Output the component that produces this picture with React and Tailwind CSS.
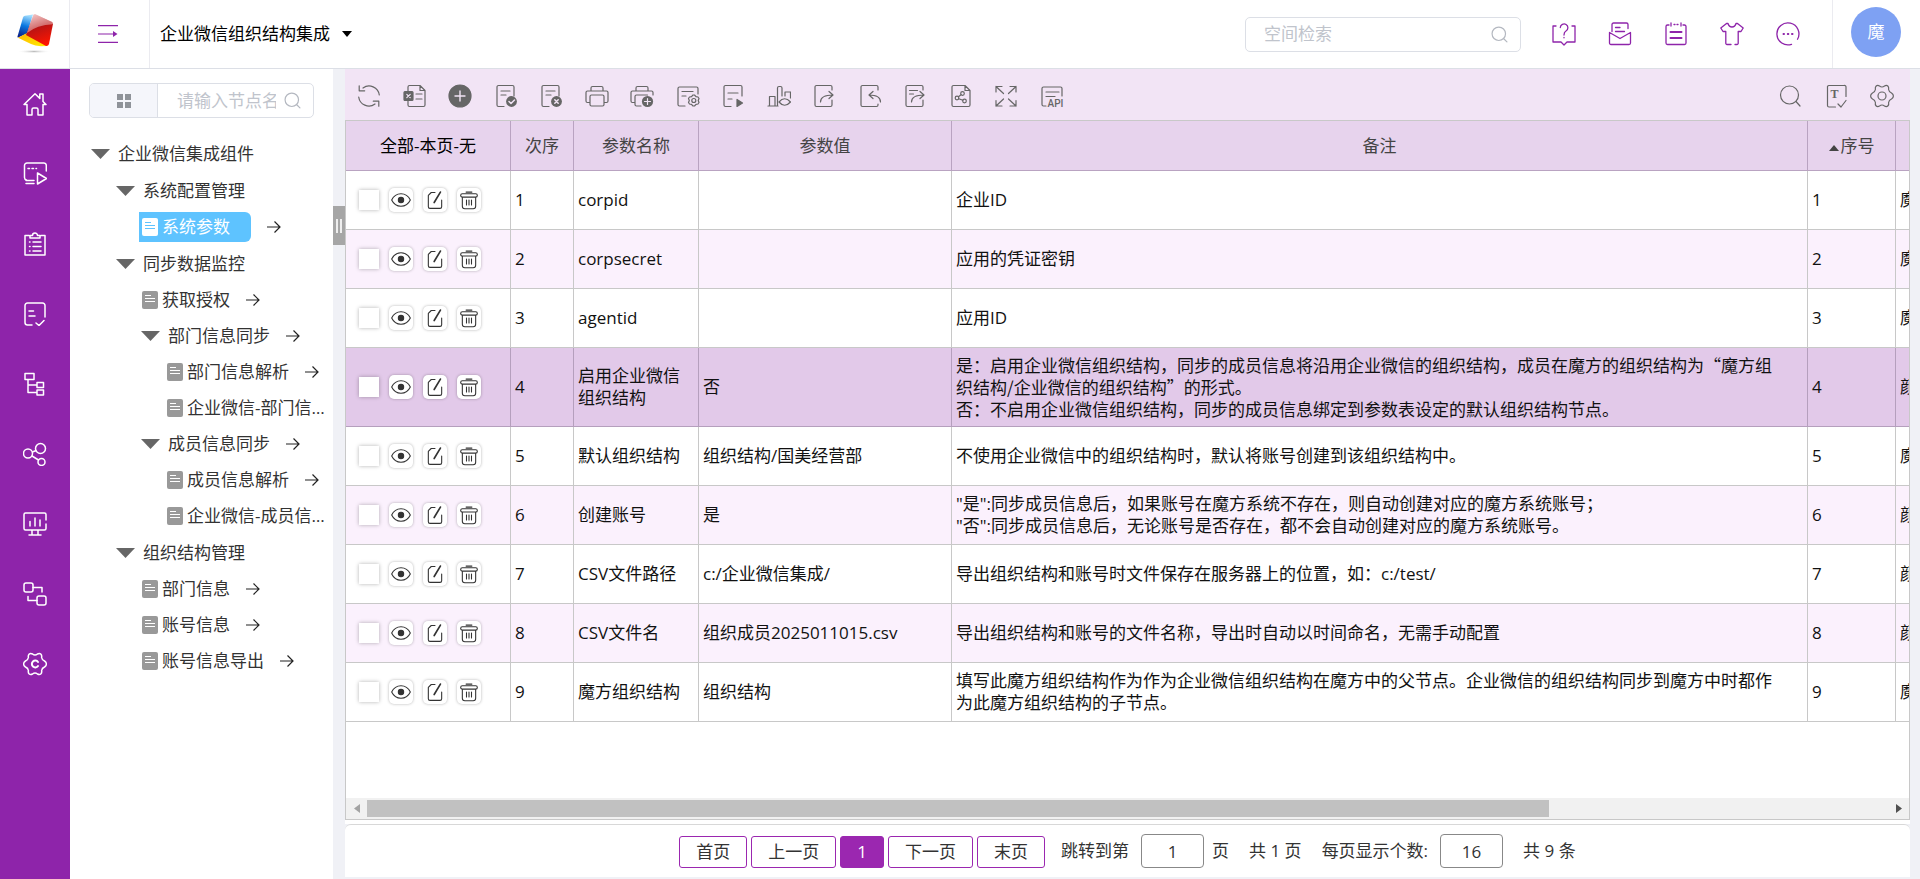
import React from "react";

function Svg({ children, className = "size-6", sw = 1.2 }) {
  return (
    <svg
      viewBox="0 0 24 24"
      className={"shrink-0 " + className}
      fill="none"
      stroke="currentColor"
      strokeWidth={sw}
      strokeLinecap="round"
      strokeLinejoin="round"
      aria-hidden="true"
    >
      {children}
    </svg>
  );
}

const GEAR =
  "M9.5 2Q12 4 14.5 2 16.5.8 18 2.200 19 3.400 18.600 5.500 19 8 21.500 9 23.400 10.200 23.400 12 23.400 13.800 21.500 15 19 16 18.600 18.500 19 20.600 18 21.800 16.500 23.200 14.500 22 12 20 9.500 22 7.500 23.200 6 21.800 5 20.600 5.400 18.500 5 16 2.500 15 .6 13.800 .6 12 .6 10.200 2.500 9 5 8 5.400 5.500 5 3.400 6 2.200 7.500 .8 9.500 2Z";

const navItems = [
  ["首页", <>
    <path d="M1 12.5 12 1.8l4.8 4.6V2h3.2v7.5l3 3h-3V23h-5v-5.5a1.5 1.5 0 0 0-1.5-1.5h-3A1.5 1.5 0 0 0 9 17.500V23H4V12.500Z" />
  </>],
  ["应用运行", <>
    <path d="M3.500 18a2.500 2.500 0 0 1-2-2.500v-12A2.500 2.500 0 0 1 4 1h17a2.500 2.500 0 0 1 2.300 2.500V9M3 18.500h8M3 21.500h8" />
    <path d="M5 6.500h1.500M9 6.500h1.500M13 6.500h.5M14.500 11v11l9-5.500Z" />
  </>],
  ["任务清单", <>
    <path d="M6 3.500H2V23h20V3.500h-4M7 6h10V3.500h-2.500a2.500 2.500 0 0 0-5 0H7Z" />
    <path d="M6.500 10h.5M6.500 14.500h.5M6.500 19h.5M10 10h8M10 14.500h8M10 19h8" />
  </>],
  ["审批", <>
    <path d="M9 23H4.500A2.500 2.500 0 0 1 2 20.500v-17A2.500 2.500 0 0 1 4.500 1h15A2.500 2.500 0 0 1 22 3.500V15M6 9h4.500M6 14h6M13 21l3 2.500 5-5" />
  </>],
  ["流程树", <>
    <path d="M2 1.500h9v6H2ZM5 7.500v13h9M5 13h9M14 10.500h6.500v5H14ZM14 18h6.500v5H14Z" />
  </>],
  ["共享", <>
    <circle cx="17.500" cy="6.500" r="5" />
    <circle cx="5" cy="11.500" r="4.500" />
    <circle cx="18.500" cy="20" r="3.500" />
    <path d="M9.500 10l3.500-1.500M9 14l6.500 4" />
  </>],
  ["监控", <>
    <path d="M23 8V2.500A1.500 1.500 0 0 0 21.500 1h-19A1.500 1.500 0 0 0 1 2.500v14A1.500 1.500 0 0 0 2.500 18h19a1.500 1.500 0 0 0 1.500-1.500V12M7 9.500V14M12 6v8M17 8v6M9 18v5M15 18v5M6 23h12" />
  </>],
  ["集成", <>
    <rect x="1" y="1" width="9" height="9" rx="2" />
    <rect x="14" y="14" width="9" height="9" rx="2" />
    <path d="M10 5.500h9V10M5 14.500v4h9" />
  </>],
  ["系统设置", <>
    <path d={GEAR} />
    <path d="M15 10a3.400 3.400 0 1 0 0 4" strokeWidth="2" />
  </>],
];

const DOC = "M10 22.500H4.500A1.500 1.500 0 0 1 3 21V3a1.500 1.500 0 0 1 1.500-1.500h14A1.500 1.500 0 0 1 20 3v9";
const tools = [
  ["刷新", <>
    <path d="M6 4A10.300 10.300 0 0 1 22.300 11M18 20A10.300 10.300 0 0 1 1.700 13M2.200 1.800v5h5.500M21.800 22.200v-5h-5.500" />
  </>],
  ["导出Excel", <>
    <path d="M5 7V3a1.500 1.500 0 0 1 1.500-1.500H17l5 5V21a1.500 1.500 0 0 1-1.500 1.500h-14A1.500 1.500 0 0 1 5 21v-4M17 1.500v5h5M13 10h6M13 15h6" />
    <rect x="1" y="7.500" width="9" height="9" rx="1" fill="currentColor" />
    <path d="M3.800 10.300l3.400 3.400M7.200 10.300l-3.400 3.400" stroke="#f2e4f5" />
  </>],
  ["新增", <>
    <circle cx="12" cy="12" r="11" fill="currentColor" />
    <path d="M12 7v10M7 12h10" stroke="#f2e4f5" strokeWidth="1.4" />
  </>],
  ["批量审核", <>
    <path d={DOC} /><path d="M7 7h9M7 11h5" />
    <circle cx="17.500" cy="17.500" r="5.400" fill="currentColor" stroke="none" />
    <path d="M15 17.500l2 2 3.500-3.500" stroke="#f2e4f5" strokeWidth="1.5" />
  </>],
  ["批量删除", <>
    <path d={DOC} /><path d="M7 7h9M7 11h5" />
    <circle cx="17.500" cy="17.500" r="5.400" fill="currentColor" stroke="none" />
    <path d="M15.800 15.800l3.400 3.400M19.200 15.800l-3.400 3.400" stroke="#f2e4f5" strokeWidth="1.500" />
  </>],
  ["打印", <>
    <path d="M6 6.500V4a1.500 1.500 0 0 1 1.500-1.500h9A1.500 1.500 0 0 1 18 4v2.500M5 18.500H2.500A1.500 1.500 0 0 1 1 17V8.500A1.500 1.500 0 0 1 2.500 7h19A1.500 1.500 0 0 1 23 8.500V17a1.500 1.500 0 0 1-1.500 1.500H19M6.500 11h11A1.500 1.500 0 0 1 19 12.500v8a1.500 1.500 0 0 1-1.500 1.500h-11A1.500 1.500 0 0 1 5 20.500v-8A1.500 1.500 0 0 1 6.500 11Z" />
  </>],
  ["批量打印", <>
    <path d="M6 6.500V4a1.500 1.500 0 0 1 1.500-1.500h9A1.500 1.500 0 0 1 18 4v2.500M5 18.500H2.500A1.500 1.500 0 0 1 1 17V8.500A1.500 1.500 0 0 1 2.500 7h19A1.500 1.500 0 0 1 23 8.500V11M11 22H6.500A1.500 1.500 0 0 1 5 20.500v-8A1.500 1.500 0 0 1 6.500 11h11" />
    <circle cx="17.500" cy="17.500" r="5.600" fill="currentColor" stroke="none" />
    <path d="M17.500 14.500v6M14.500 17.500h6" stroke="#f2e4f5" />
  </>],
  ["打印设置", <>
    <path d="M9 22H3.500A1.500 1.500 0 0 1 2 20.500v-16A1.500 1.500 0 0 1 3.500 3h17A1.500 1.500 0 0 1 22 4.500V10M6 7.500h11M6 12h4" />
    <path d="M13.500 13l2-.3L17 11h1.500l1.500 1.700 2 .3 1 1.500-.8 2 .8 2-1 1.500-2 .3-1.500 1.700H17l-1.500-1.700-2-.3-1-1.500.8-2-.8-2Z" />
    <circle cx="17.800" cy="16.500" r="2" />
  </>],
  ["执行", <>
    <path d="M10 22.500H4.500A1.500 1.500 0 0 1 3 21V3a1.500 1.500 0 0 1 1.500-1.500h15A1.500 1.500 0 0 1 21 3v9M7 9h10M7 15h4" />
    <path d="M16 15.500v7l5.500-3.500Z" fill="currentColor" />
  </>],
  ["图表", <>
    <path d="M1 22h10M2.500 22V12.500h5.500V22M10.500 22V4A1.500 1.500 0 0 1 12 2.500h1.500A1.500 1.500 0 0 1 15 4v8M18 12V8h5.500v6" />
    <path d="M12 18q5.500-6.500 11.500 0-6 6.500-11.500 0Z" />
  </>],
  ["导出", <>
    <path d="M20 6V3a1.500 1.500 0 0 0-1.500-1.500h-14A1.500 1.500 0 0 0 3 3v18a1.500 1.500 0 0 0 1.500 1.500h14A1.500 1.500 0 0 0 20 21v-5M8.500 18q0-7 12.500-7M17 7.500l4 3.500-4 3.500" />
  </>],
  ["导入", <>
    <path d="M20 6V3a1.500 1.500 0 0 0-1.500-1.500h-14A1.500 1.500 0 0 0 3 3v18a1.500 1.500 0 0 0 1.500 1.500h14A1.500 1.500 0 0 0 20 21v-1M22.500 18q0-7-11.500-7M15 7.500L11 11l4 3.500" />
  </>],
  ["导出模板", <>
    <path d="M20 6V3a1.500 1.500 0 0 0-1.500-1.500h-14A1.500 1.500 0 0 0 3 3v18a1.500 1.500 0 0 0 1.500 1.500h14A1.500 1.500 0 0 0 20 21v-5M8.500 18q0-7 12.500-7M17 7.500l4 3.500-4 3.500M6.500 6.500h8M6.500 10h4" />
  </>],
  ["分享", <>
    <path d="M16 1.500H4.500A1.500 1.500 0 0 0 3 3v18a1.500 1.500 0 0 0 1.500 1.500h15A1.500 1.500 0 0 0 21 21V6.500ZM16 1.500V6.500h5" />
    <circle cx="13.500" cy="9.500" r="1.800" /><circle cx="8" cy="14" r="1.800" /><circle cx="15.500" cy="17" r="1.800" />
    <path d="M12 10.700l-2.500 2M9.800 14.700l4 1.600" />
  </>],
  ["全屏", <>
    <path d="M2 8V2.500h6M2 2.500l7.500 7M22 8V2.500h-6M22 2.500l-7.500 7M2 16.500V22h6M2 22l7.500-7M22 16.500V22h-6M22 22l-7.500-7" />
  </>],
  ["API", <>
    <path d="M6 22H3.500A1.500 1.500 0 0 1 2 20.500v-16A1.500 1.500 0 0 1 3.500 3h17A1.500 1.500 0 0 1 22 4.500V12M6 8h13M6 12.500h9" />
    <text x="7.500" y="23" fontSize="10" fontWeight="500" fontFamily="Roboto, sans-serif" fill="currentColor" stroke="none">API</text>
  </>],
];

const rightTools = [
  ["搜索", <><circle cx="11.500" cy="11" r="9" /><path d="M18 17.500l4 4.500" /></>],
  ["文本校验", <>
    <path d="M11.500 23H5a1.500 1.500 0 0 1-1.500-1.500v-18A1.500 1.500 0 0 1 5 1.500h15A1.500 1.500 0 0 1 22 3v9.500M14 20l3 3 5-6.500" />
    <text x="6.500" y="13.500" fontSize="12" fontWeight="700" fontFamily="'Liberation Serif', serif" fill="currentColor" stroke="none">T</text>
  </>],
  ["设置", <><path d={GEAR} /><circle cx="12" cy="12" r="4" /></>],
];

const headIcons = [
  ["帮助", <>
    <path d="M4 4H1v16h8l3 3 3-3h8V4h-3M8.300 5.500a3.800 3.800 0 1 1 5.700 3.500q-2 1.200-2 4M12 15.500v.3" />
  </>],
  ["邮件", <>
    <path d="M4 9.500V2.500A1.500 1.500 0 0 1 5.500 1h13A1.500 1.500 0 0 1 20 2.500v4M1.500 10.500 12 16.500l10.500-6V21A1.500 1.500 0 0 1 21 22.500H3A1.500 1.500 0 0 1 1.500 21ZM7.500 5.500h4.500M7.500 9.500h9" />
  </>],
  ["日志", <>
    <path d="M5 3H3.500A1.500 1.500 0 0 0 2 4.500v16.500a1.500 1.500 0 0 0 1.500 1.500h17A1.500 1.500 0 0 0 22 21V4.500A1.500 1.500 0 0 0 20.500 3H19M7 1v3M17 1v3M10 2.500h1M13 2.500h1" />
    <path d="M6.500 10h11M6.500 16h11" strokeWidth="2" />
  </>],
  ["主题", <>
    <path d="M11 22.500H7a1.200 1.200 0 0 1-1.200-1.200V9.500H3L.8 6 6.500 1.500H8q1 3.500 4 3.500t4-3.500h1.500L23.200 6 21 9.500h-2.800v11.800a1.200 1.200 0 0 1-1.200 1.200h-2" />
  </>],
  ["更多", <>
    <path d="M15.500 22.300A11 11 0 1 1 21.500 17.300" />
    <path d="M7.500 12h.5M11.800 12h.5M16 12h.5" strokeWidth="2" />
  </>],
];

function SearchGlyph({ className }) {
  return (
    <Svg className={className} sw={1.700}>
      <circle cx="11" cy="11" r="9.500" />
      <path d="M18 18l4.500 4.500" />
    </Svg>
  );
}

function Logo() {
  return (
    <svg viewBox="0 0 40 42" className="h-[42px] w-10" role="img" aria-label="魔方">
      <defs>
        <linearGradient id="lb" x1="0.600" y1="0" x2="0.400" y2="1">
          <stop offset="0" stopColor="#a5e0ff" /><stop offset=".5" stopColor="#0a78e0" /><stop offset="1" stopColor="#0b1f86" />
        </linearGradient>
        <linearGradient id="lr" x1="0.300" y1="0" x2="0.600" y2="1">
          <stop offset="0" stopColor="#e89a9a" /><stop offset=".4" stopColor="#b81414" /><stop offset="1" stopColor="#ff1500" />
        </linearGradient>
        <linearGradient id="ly" x1="0" y1="0" x2="1" y2="1">
          <stop offset="0" stopColor="#ffb400" /><stop offset="1" stopColor="#ffee00" />
        </linearGradient>
        <radialGradient id="ls"><stop offset="0" stopColor="#bbb" /><stop offset="1" stopColor="#fff" stopOpacity="0" /></radialGradient>
      </defs>
      <ellipse cx="19" cy="38.500" rx="17" ry="2" fill="url(#ls)" />
      <path d="M8 4.500Q8.500 3 10 2.700L18 1.500 12 20.500 3.200 24.500Q2.300 24.700 2.500 23.500Z" fill="url(#lb)" />
      <path d="M3 24.800 11.500 20.300 32 33 26 33.300Q20 33 16 31Z" fill="url(#ly)" />
      <path d="M18.500 1.800Q19.500 1 20.800 1.500L36.500 8.800Q38.200 9.700 37.900 11.300L34 31Q33.300 33.300 31 33L11 22Z" fill="url(#lr)" />
      <path d="M18.500 1.800Q19.500 1 20.800 1.500L36.500 8.800Q38.200 9.700 37.900 11.300 22 12 12 20Z" fill="#fff" opacity=".4" />
    </svg>
  );
}

const tree = [
  [0, "dir", "企业微信集成组件", false],
  [1, "dir", "系统配置管理", false],
  [2, "leaf", "系统参数", true, true],
  [1, "dir", "同步数据监控", false],
  [2, "leaf", "获取授权", true],
  [2, "dir", "部门信息同步", true],
  [3, "leaf", "部门信息解析", true],
  [3, "leaf", "企业微信-部门信息同步", false],
  [2, "dir", "成员信息同步", true],
  [3, "leaf", "成员信息解析", true],
  [3, "leaf", "企业微信-成员信息同步", false],
  [1, "dir", "组织结构管理", false],
  [2, "leaf", "部门信息", true],
  [2, "leaf", "账号信息", true],
  [2, "leaf", "账号信息导出", true],
];
const indents = ["pl-[21px]", "pl-[46px]", "pl-[71px]", "pl-[96px]"];

function TreeRow({ level, kind, label, arrow, selected }) {
  return (
    <li className={"flex items-center " + (level < 2 ? "h-[37px] " : "h-9 ") + indents[level]}>
      {kind === "dir" ? (
        <button type="button" className="flex shrink-0 items-center gap-2 whitespace-nowrap">
          <svg viewBox="0 0 19 10" className="h-[10px] w-[19px]" aria-hidden="true"><path d="M0 0h19L9.500 10Z" fill="#666" /></svg>
          {label}
        </button>
      ) : (
        <a
          href="#node"
          className={
            "flex h-[30px] min-w-0 items-center gap-1 " +
            (selected ? "-ml-[2px] w-[112px] rounded-r-md bg-[#5ec3ff] pl-[3px] text-white" : "pl-px")
          }
        >
          <svg viewBox="0 0 16 18" className="h-[18px] w-4 shrink-0" aria-hidden="true">
            <rect width="16" height="18" rx="2" fill={selected ? "#fff" : "#999"} />
            <path d="M3 4.500h6M3 7.500h10M3 10.500h10" stroke={selected ? "#5ec3ff" : "#fff"} strokeWidth="1.200" />
          </svg>
          <span className="truncate">{label}</span>
        </a>
      )}
      {arrow && (
        <svg viewBox="0 0 14 12" className="ml-4 h-3 w-[14px] shrink-0" fill="none" stroke="#222" strokeWidth="1.200" aria-hidden="true">
          <path d="M0 6h13M7.500.5 13 6l-5.500 5.500" />
        </svg>
      )}
    </li>
  );
}

const rows = [
  ["1", "corpid", "", "企业ID", "魔方"],
  ["2", "corpsecret", "", "应用的凭证密钥", "魔方"],
  ["3", "agentid", "", "应用ID", "魔方"],
  ["4", "启用企业微信\n组织结构", "否", "是：启用企业微信组织结构，同步的成员信息将沿用企业微信的组织结构，成员在魔方的组织结构为“魔方组\n织结构/企业微信的组织结构”的形式。\n否：不启用企业微信组织结构，同步的成员信息绑定到参数表设定的默认组织结构节点。", "颜"],
  ["5", "默认组织结构", "组织结构/国美经营部", "不使用企业微信中的组织结构时，默认将账号创建到该组织结构中。", "魔方"],
  ["6", "创建账号", "是", "\"是\":同步成员信息后，如果账号在魔方系统不存在，则自动创建对应的魔方系统账号；\n\"否\":同步成员信息后，无论账号是否存在，都不会自动创建对应的魔方系统账号。", "颜"],
  ["7", "CSV文件路径", "c:/企业微信集成/", "导出组织结构和账号时文件保存在服务器上的位置，如：c:/test/", "颜"],
  ["8", "CSV文件名", "组织成员2025011015.csv", "导出组织结构和账号的文件名称，导出时自动以时间命名，无需手动配置", "颜"],
  ["9", "魔方组织结构", "组织结构", "填写此魔方组织结构作为作为企业微信组织结构在魔方中的父节点。企业微信的组织结构同步到魔方中时都作\n为此魔方组织结构的子节点。", "魔方"],
];

const rowActions = [
  ["查看", <><path d="M.8 12Q4.500 4.500 12 4.500T23.200 12Q19.500 19.500 12 19.500T.8 12Z" /><circle cx="12" cy="12" r="3.200" fill="currentColor" /></>],
  ["编辑", <><path d="M12 3H7.500L4 6.500V20a2 2 0 0 0 2 2h12a2 2 0 0 0 2-2V12" /><path d="M18.500 2.500 11 15" strokeWidth="2" /></>],
  ["删除", <><path d="M8.500 2.500h7M4 4.500h16A1.800 1.800 0 0 1 20 8.500H4A1.800 1.800 0 0 1 4 4.500ZM4 8.500v11A3 3 0 0 0 7 22.500h10a3 3 0 0 0 3-3v-11M9 12v6M12 12v6M15 12v6" /></>],
];

function DataTable() {
  const th = "border-r border-b border-[#b9a3c1] font-normal";
  return (
    <table className="w-[calc(100%+457px)] table-fixed border-separate border-spacing-0 text-[#111]">
      <colgroup>
        <col className="w-[165px]" /><col className="w-[63px]" /><col className="w-[125px]" /><col className="w-[253px]" />
        <col /><col className="w-[88px]" /><col className="w-[470px]" />
      </colgroup>
      <thead className="bg-[#e7d3ed] text-[#444]">
        <tr className="h-[50px]">
          <th className={th + " text-black"}>全部-本页-无</th>
          <th className={th}>次序</th>
          <th className={th}>参数名称</th>
          <th className={th}>参数值</th>
          <th className={th}>备注</th>
          <th className={th}>
            <button type="button" className="inline-flex items-center gap-[2px]">
              <svg viewBox="0 0 10 6" className="mt-1 h-[6px] w-[10px]" aria-hidden="true"><path d="M0 6h10L5 0Z" fill="#444" /></svg>
              序号
            </button>
          </th>
          <th className={th} />
        </tr>
      </thead>
      <tbody>
        {rows.map((r, i) => {
          const sel = i === 3;
          const td = "border-r border-b pl-1 whitespace-pre " + (sel ? "border-[#b59fbd]" : "border-[#c8c8c8]");
          return (
            <tr key={r[0]} className={(sel ? "h-[79px] bg-[#e2c9e9]" : i % 2 ? "h-[59px] bg-[#fbf1fd]" : "h-[59px] bg-white")}>
              <td className={td}>
                <div className="flex items-center gap-[10px] pl-[9px]">
                  <input type="checkbox" aria-label={"选择第" + r[0] + "行"} className="size-5 appearance-none bg-white shadow-[0_0_4px_rgba(0,0,0,0.3)]" />
                  {rowActions.map(([name, icon]) => (
                    <button key={name} type="button" aria-label={name} className="flex size-6 items-center justify-center rounded-[5px] bg-white text-[#333] shadow-[0_0_3px_rgba(0,0,0,0.3)]">
                      <Svg className="size-5" sw={1.300}>{icon}</Svg>
                    </button>
                  ))}
                </div>
              </td>
              <td className={td}>{r[0]}</td>
              <td className={td}>{r[1]}</td>
              <td className={td}>{r[2]}</td>
              <td className={td + (sel ? " font-['Noto_Sans_CJK_SC',sans-serif]" : "")}>{r[3]}</td>
              <td className={td}>{r[0]}</td>
              <td className={td}>{r[4]}</td>
            </tr>
          );
        })}
      </tbody>
    </table>
  );
}

function Pager() {
  const b = "h-8 rounded-[3px] border border-[#9b27b0] px-4";
  return (
    <footer className="flex h-[53px] shrink-0 items-center justify-center rounded-t-md border-t border-[#d8d8d8] bg-white">
      <div className="flex gap-1 pt-[1px]">
        <button type="button" className={b}>首页</button>
        <button type="button" className={b}>上一页</button>
        <button type="button" className={b + " bg-[#9b27b0] text-white"}>1</button>
        <button type="button" className={b}>下一页</button>
        <button type="button" className={b}>末页</button>
      </div>
      <label htmlFor="goto" className="ml-4">跳转到第</label>
      <input id="goto" type="text" defaultValue="1" className="ml-3 h-[34px] w-[63px] rounded-[4px] border border-[#888] text-center" />
      <span className="ml-2">页</span>
      <span className="ml-5">共 1 页</span>
      <label htmlFor="size" className="ml-5">每页显示个数:</label>
      <input id="size" type="text" defaultValue="16" className="ml-3 h-[34px] w-[63px] rounded-[4px] border border-[#888] text-center" />
      <span className="ml-5">共 9 条</span>
    </footer>
  );
}

export default function App() {
  return (
    <div className="flex h-screen flex-col overflow-hidden bg-[#f0f1f6] font-['Open_Sans','Noto_Sans_CJK_SC',sans-serif] text-[17px] leading-[22px] font-normal text-[#333]">
      <header className="flex h-[69px] shrink-0 border-b border-[#dcdfe6] bg-white">
        <div className="flex w-[70px] items-center justify-center border-r border-[#ebebf0]"><Logo /></div>
        <div className="flex w-20 items-center justify-center border-r border-[#ebebf0] pr-1">
          <button type="button" aria-label="展开菜单" className="text-[#8e24aa]">
            <svg viewBox="0 0 20 18" className="h-[18px] w-5" fill="none" stroke="currentColor" strokeWidth="1.200" aria-hidden="true">
              <path d="M0 .7h20M0 9h18M0 17.300h20" /><path d="M15 6l4.500 3-4.500 3Z" fill="currentColor" stroke="none" />
            </svg>
          </button>
        </div>
        <button type="button" className="flex items-center gap-3 pl-[10px] text-[17px] text-black">
          企业微信组织结构集成
          <svg viewBox="0 0 10 6" className="h-[6px] w-[10px]" aria-hidden="true"><path d="M0 0h10L5 6Z" fill="#000" /></svg>
        </button>
        <div className="ml-auto flex items-center">
          <div className="flex h-[35px] w-[276px] items-center rounded-[5px] border border-[#dcdfe6] pr-3 pl-[18px]">
            <input type="text" aria-label="空间检索" placeholder="空间检索" className="min-w-0 flex-1 outline-none placeholder:text-[#c0c4cc]" />
            <SearchGlyph className="size-[17px] text-[#b4b8c0]" />
          </div>
          <div className="ml-[31px] flex gap-8 text-[#8e24aa]">
            {headIcons.map(([n, ic]) => (
              <button key={n} type="button" aria-label={n}><Svg sw={1.300}>{ic}</Svg></button>
            ))}
          </div>
        </div>
        <div className="ml-8 flex w-[88px] items-center border-l border-[#ebebf0] pb-1 pl-[18px]">
          <button type="button" className="size-[50px] rounded-full bg-[#7ea1f3] text-[17px] text-white">魔</button>
        </div>
      </header>

      <div className="flex min-h-0 flex-1">
        <nav className="w-[70px] shrink-0 bg-[#8e24aa] text-white">
          <ul>
            {navItems.map(([n, ic]) => (
              <li key={n}>
                <a href="#nav" aria-label={n} className="flex h-[70px] items-center justify-center"><Svg sw={1.500}>{ic}</Svg></a>
              </li>
            ))}
          </ul>
        </nav>

        <aside className="w-[263px] shrink-0 bg-white">
          <div className="mx-[19px] mt-[14px] flex h-[35px] overflow-hidden rounded-[5px] border border-[#dcdfe6]">
            <button type="button" aria-label="视图" className="flex w-[68px] shrink-0 items-center justify-center border-r border-[#dcdfe6] bg-[#f5f6fb]">
              <svg viewBox="0 0 14 14" className="size-[14px]" fill="#8f9399" aria-hidden="true">
                <path d="M0 0h6v6H0ZM8 0h6v6H8ZM0 8h6v6H0ZM8 8h6v6H8Z" />
              </svg>
            </button>
            <input type="text" aria-label="节点名称" placeholder="请输入节点名称" className="ml-[19px] min-w-0 flex-1 outline-none placeholder:text-[#c0c4cc]" />
            <SearchGlyph className="mr-3 ml-2 size-[17px] self-center text-[#b4b8c0]" />
          </div>
          <ul className="mt-[17px] overflow-hidden">
            {tree.map(([level, kind, label, arrow, selected]) => (
              <TreeRow key={label} level={level} kind={kind} label={label} arrow={arrow} selected={selected} />
            ))}
          </ul>
        </aside>

        <div className="w-3 shrink-0 pt-[137px]">
          <button type="button" aria-label="调整宽度" className="flex h-[39px] w-3 items-center justify-center gap-[2px] bg-[#a6a6a6]">
            <span className="h-[14px] w-[2px] bg-[#eee]" />
            <span className="h-[14px] w-[2px] bg-[#eee]" />
          </button>
        </div>

        <main className="mr-[10px] mb-[2px] flex min-w-0 flex-1 flex-col">
          <div className="flex h-[51px] shrink-0 items-center justify-between bg-[#f2e4f5] pt-[2px] pr-4 pl-3 text-[#666]">
            <div className="flex w-[707px] justify-between">
              {tools.map(([n, ic]) => (
                <button key={n} type="button" aria-label={n}><Svg>{ic}</Svg></button>
              ))}
            </div>
            <div className="flex gap-[22px]">
              {rightTools.map(([n, ic]) => (
                <button key={n} type="button" aria-label={n}><Svg>{ic}</Svg></button>
              ))}
            </div>
          </div>
          <div className="flex min-h-0 flex-1 flex-col border border-[#c8c8c8] bg-white">
            <div className="min-h-0 flex-1 overflow-hidden"><DataTable /></div>
            <div className="flex h-[21px] items-center bg-[#f1f1f1]">
              <button type="button" aria-label="向左滚动" className="flex w-[21px] justify-center">
                <svg viewBox="0 0 6 9" className="h-[9px] w-[6px]" aria-hidden="true"><path d="M6 0v9L0 4.500Z" fill="#a3a3a3" /></svg>
              </button>
              <div className="h-[17px] flex-1"><div className="h-full w-[1182px] max-w-full bg-[#c1c1c1]" /></div>
              <button type="button" aria-label="向右滚动" className="flex w-[21px] justify-center">
                <svg viewBox="0 0 6 9" className="h-[9px] w-[6px]" aria-hidden="true"><path d="M0 0v9l6-4.500Z" fill="#505050" /></svg>
              </button>
            </div>
          </div>
          <div className="h-1 shrink-0 bg-white" />
          <Pager />
        </main>
      </div>
    </div>
  );
}
